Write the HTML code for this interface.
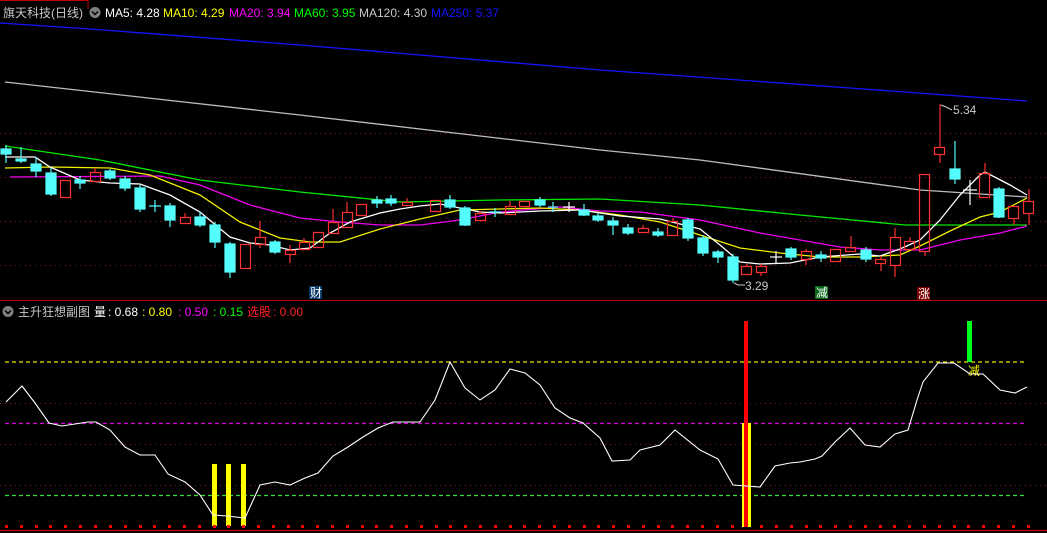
<!DOCTYPE html>
<html><head><meta charset="utf-8"><style>
html,body{margin:0;padding:0;background:#000;width:1047px;height:533px;overflow:hidden}
svg{display:block}
text{font-family:"Liberation Sans","Noto Sans CJK SC",sans-serif;font-size:12px}
</style></head><body>
<svg width="1047" height="533" xmlns="http://www.w3.org/2000/svg">
<rect width="1047" height="533" fill="#000"/>
<!-- grid -->
<g stroke="#8a1c1c" stroke-width="1" stroke-dasharray="1,4">
<line x1="0" y1="133.5" x2="1047" y2="133.5"/>
<line x1="0" y1="177.5" x2="1047" y2="177.5"/>
<line x1="0" y1="221.5" x2="1047" y2="221.5"/>
<line x1="0" y1="265.5" x2="1047" y2="265.5"/>
<line x1="0" y1="403.5" x2="1047" y2="403.5"/>
<line x1="0" y1="444.5" x2="1047" y2="444.5"/>
<line x1="0" y1="485.5" x2="1047" y2="485.5"/>
</g>
<line x1="0" y1="300.5" x2="1047" y2="300.5" stroke="#c00000"/>
<line x1="0" y1="530.5" x2="1047" y2="530.5" stroke="#c00000" stroke-width="1.5"/>
<path d="M0 0.5H88V9" stroke="#c00000" fill="none"/>
<!-- MAs -->
<g fill="none" stroke-width="1.3">
<polyline stroke="#1414ff" points="0,23 90,29 300,45 600,70 850,88 1027,101"/>
<polyline stroke="#bdbdbd" points="5,82 300,115 600,150 700,160 920,190 1027,197"/>
<polyline stroke="#00e800" points="5,146 100,160 200,180 300,192 400,202 500,200 600,199 700,205 800,215 905,225 1027,225"/>
<polyline stroke="#f000f0" points="10,177 160,176 200,185 250,205 300,218 340,222 380,225 420,225 460,220 500,212 560,207 600,211 640,212 700,220 760,233 800,240 840,247 880,250 920,250 960,240 1000,233 1027,226"/>
<polyline stroke="#f0f000" points="5,168 50,167 110,168 150,175 200,195 240,222 280,238 310,242 340,242 380,229 420,219 460,210 500,209 540,208 580,210 620,215 660,222 700,235 740,248 780,253 820,257 860,257 900,255 920,246 950,231 980,217 1000,212 1027,198"/>
<polyline stroke="#ffffff" points="5,157 35,157 50,167 80,180 110,183 140,184 170,195 200,212 230,237 250,243 270,245 290,250 310,248 330,233 350,222 380,213 400,209 420,206 440,204 460,208 480,212 500,213 520,212 540,211 580,210 620,216 660,219 700,229 720,245 740,262 760,264 790,263 820,257 860,254 880,256 900,249 920,240 940,220 960,195 980,175 985,172 1010,185 1027,195"/>
</g>
<!-- candles -->
<g stroke-width="1.2">
<g stroke="#54fcfc" fill="#54fcfc">
<line x1="6" y1="145" x2="6" y2="163"/><rect x="1" y="149" width="10" height="5"/>
<line x1="21" y1="147" x2="21" y2="163"/><rect x="16" y="159" width="10" height="2"/>
<line x1="36" y1="157" x2="36" y2="177"/><rect x="31" y="164" width="10" height="7"/>
<line x1="51" y1="168" x2="51" y2="196"/><rect x="46" y="173" width="10" height="21"/>
<line x1="80" y1="176" x2="80" y2="189"/><rect x="75" y="180" width="10" height="3"/>
<line x1="110" y1="169" x2="110" y2="180"/><rect x="105" y="171" width="10" height="7"/>
<line x1="125" y1="176" x2="125" y2="191"/><rect x="120" y="179" width="10" height="9"/>
<line x1="140" y1="185" x2="140" y2="212"/><rect x="135" y="188" width="10" height="21"/>
<line x1="155" y1="200" x2="155" y2="212"/><line x1="149" y1="206" x2="161" y2="206"/>
<line x1="170" y1="203" x2="170" y2="227"/><rect x="165" y="206" width="10" height="14"/>
<line x1="200" y1="212" x2="200" y2="227"/><rect x="195" y="217" width="10" height="8"/>
<line x1="215" y1="222" x2="215" y2="248"/><rect x="210" y="225" width="10" height="17"/>
<line x1="230" y1="242" x2="230" y2="278"/><rect x="225" y="244" width="10" height="28"/>
<line x1="275" y1="240" x2="275" y2="254"/><rect x="270" y="242" width="10" height="10"/>
<line x1="377" y1="196" x2="377" y2="208"/><rect x="372" y="200" width="10" height="3"/>
<line x1="391" y1="195" x2="391" y2="206"/><rect x="386" y="199" width="10" height="4"/>
<line x1="450" y1="195" x2="450" y2="209"/><rect x="445" y="200" width="10" height="7"/>
<line x1="465" y1="206" x2="465" y2="226"/><rect x="460" y="208" width="10" height="17"/>
<line x1="495" y1="208" x2="495" y2="217"/><line x1="489" y1="212" x2="501" y2="212"/>
<line x1="540" y1="197" x2="540" y2="207"/><rect x="535" y="200" width="10" height="5"/>
<line x1="553" y1="202" x2="553" y2="212"/><line x1="548" y1="207" x2="558" y2="207"/>
<line x1="584" y1="204" x2="584" y2="216"/><rect x="579" y="210" width="10" height="5"/>
<line x1="598" y1="213" x2="598" y2="222"/><rect x="593" y="216" width="10" height="4"/>
<line x1="613" y1="217" x2="613" y2="235"/><rect x="608" y="221" width="10" height="4"/>
<line x1="628" y1="224" x2="628" y2="235"/><rect x="623" y="228" width="10" height="5"/>
<line x1="658" y1="228" x2="658" y2="237"/><rect x="653" y="232" width="10" height="3"/>
<line x1="688" y1="218" x2="688" y2="241"/><rect x="683" y="220" width="10" height="18"/>
<line x1="703" y1="235" x2="703" y2="256"/><rect x="698" y="238" width="10" height="15"/>
<line x1="718" y1="250" x2="718" y2="263"/><rect x="713" y="252" width="10" height="5"/>
<line x1="733" y1="254" x2="733" y2="283"/><rect x="728" y="257" width="10" height="23"/>
<line x1="791" y1="247" x2="791" y2="260"/><rect x="786" y="249" width="10" height="8"/>
<line x1="821" y1="251" x2="821" y2="262"/><rect x="816" y="255" width="10" height="3"/>
<line x1="866" y1="247" x2="866" y2="262"/><rect x="861" y="250" width="10" height="9"/>
<line x1="955" y1="141" x2="955" y2="184"/><rect x="950" y="169" width="10" height="10"/>
<line x1="999" y1="187" x2="999" y2="218"/><rect x="994" y="189" width="10" height="28"/>
</g>
<g stroke="#ffffff" fill="none">
<line x1="569" y1="202" x2="569" y2="212"/><line x1="563" y1="207" x2="575" y2="207"/>
<line x1="776" y1="251" x2="776" y2="263"/><line x1="770" y1="257" x2="782" y2="257"/>
<line x1="970" y1="180" x2="970" y2="205"/><line x1="963" y1="190" x2="977" y2="190"/>
</g>
<g stroke="#ff3030" fill="none">
<rect x="60.5" y="180.5" width="10" height="17"/>
<line x1="185" y1="213" x2="185" y2="217"/><rect x="180.5" y="217.5" width="10" height="6"/>
<line x1="95" y1="168" x2="95" y2="172"/><rect x="90.5" y="172.5" width="10" height="9"/>
<rect x="240.5" y="244.5" width="10" height="24"/>
<line x1="260" y1="221" x2="260" y2="237"/><line x1="260" y1="244" x2="260" y2="248"/><rect x="255.5" y="237.5" width="10" height="7"/>
<line x1="290" y1="245" x2="290" y2="250"/><line x1="290" y1="254" x2="290" y2="263"/><rect x="285.5" y="250.5" width="10" height="4"/>
<line x1="304" y1="238" x2="304" y2="242"/><rect x="299.5" y="242.5" width="10" height="7"/>
<rect x="313.5" y="232.5" width="10" height="15"/>
<line x1="333" y1="209" x2="333" y2="222"/><rect x="328.5" y="222.5" width="10" height="11"/>
<line x1="347" y1="202" x2="347" y2="212"/><rect x="342.5" y="212.5" width="10" height="15"/>
<rect x="356.5" y="204.5" width="10" height="11"/>
<line x1="407" y1="198" x2="407" y2="202"/><rect x="402.5" y="202.5" width="10" height="3"/>
<rect x="430.5" y="200.5" width="10" height="11"/>
<line x1="480" y1="211" x2="480" y2="213"/><rect x="475.5" y="213.5" width="10" height="7"/>
<line x1="510" y1="201" x2="510" y2="206"/><rect x="505.5" y="206.5" width="10" height="8"/>
<rect x="519.5" y="201.5" width="10" height="5"/>
<line x1="643" y1="225" x2="643" y2="228"/><rect x="638.5" y="228.5" width="10" height="4"/>
<line x1="673" y1="218" x2="673" y2="221"/><rect x="667.5" y="221.5" width="10" height="14"/>
<line x1="747" y1="264" x2="747" y2="266"/><rect x="741.5" y="266.5" width="10" height="8"/>
<line x1="761" y1="264" x2="761" y2="266"/><line x1="761" y1="272" x2="761" y2="276"/><rect x="756.5" y="266.5" width="10" height="6"/>
<line x1="806" y1="249" x2="806" y2="251"/><line x1="806" y1="259" x2="806" y2="265"/><rect x="801.5" y="251.5" width="10" height="8"/>
<rect x="830.5" y="249.5" width="10" height="12"/>
<line x1="851" y1="236" x2="851" y2="247"/><rect x="845.5" y="247.5" width="10" height="4"/>
<line x1="881" y1="256" x2="881" y2="259"/><line x1="881" y1="263" x2="881" y2="271"/><rect x="875.5" y="259.5" width="10" height="4"/>
<line x1="895" y1="228" x2="895" y2="237"/><line x1="895" y1="265" x2="895" y2="277"/><rect x="890.5" y="237.5" width="10" height="28"/>
<line x1="910" y1="237" x2="910" y2="241"/><rect x="904.5" y="241.5" width="10" height="8"/>
<line x1="925" y1="251" x2="925" y2="256"/><rect x="919.5" y="174.5" width="10" height="77"/>
<line x1="940" y1="104" x2="940" y2="147"/><line x1="940" y1="154" x2="940" y2="163"/><rect x="934.5" y="147.5" width="10" height="7"/>
<line x1="985" y1="163" x2="985" y2="173"/><rect x="979.5" y="173.5" width="10" height="24"/>
<line x1="1014" y1="218" x2="1014" y2="225"/><rect x="1008.5" y="206.5" width="10" height="12"/>
<line x1="1029" y1="189" x2="1029" y2="201"/><line x1="1029" y1="213" x2="1029" y2="225"/><rect x="1023.5" y="201.5" width="10" height="12"/>
</g>
</g>
<!-- price labels -->
<path d="M941 105 L946 107 L952 110" stroke="#c8c8c8" fill="none"/>
<text x="953" y="114" fill="#c8c8c8">5.34</text>
<path d="M734 283 L738 285 L745 285" stroke="#c8c8c8" fill="none"/>
<text x="745" y="290" fill="#c8c8c8">3.29</text>
<rect x="309" y="286" width="13" height="13" fill="#0a3a6a"/>
<text x="310" y="297" fill="#fff" font-size="11">财</text>
<rect x="815" y="286" width="13" height="13" fill="#0a6a1a"/>
<text x="816" y="297" fill="#fff" font-size="11">减</text>
<rect x="917" y="287" width="13" height="13" fill="#7a0000"/>
<text x="918" y="298" fill="#fff" font-size="11">涨</text>
<!-- header -->
<text x="3" y="17" fill="#c8c8c8" font-size="13">旗天科技(日线)</text>
<circle cx="95" cy="12.5" r="5.5" fill="#808080"/><path d="M92 11.5 L95 14.5 L98 11.5" stroke="#000" stroke-width="1.5" fill="none"/>
<text x="105" y="17" fill="#ffffff">MA5: 4.28</text>
<text x="163" y="17" fill="#ffff00">MA10: 4.29</text>
<text x="229" y="17" fill="#ff00ff">MA20: 3.94</text>
<text x="294" y="17" fill="#00ff00">MA60: 3.95</text>
<text x="359" y="17" fill="#c8c8c8">MA120: 4.30</text>
<text x="431" y="17" fill="#1414ff">MA250: 5.37</text>
<!-- sub header -->
<circle cx="8" cy="311.5" r="5.5" fill="#808080"/><path d="M5 310.5 L8 313.5 L11 310.5" stroke="#000" stroke-width="1.5" fill="none"/>
<text x="18" y="316" fill="#c8c8c8" font-size="13">主升狂想副图</text>
<text x="94" y="316" fill="#fff" font-size="13">量</text>
<text x="108" y="316" fill="#fff">: 0.68</text>
<text x="142" y="316" fill="#ffff00">: 0.80</text>
<text x="178" y="316" fill="#ff00ff">: 0.50</text>
<text x="213" y="316" fill="#00ff00">: 0.15</text>
<text x="247" y="316" fill="#ff2020" font-size="13">选股</text>
<text x="273" y="316" fill="#ff2020">: 0.00</text>
<!-- indicator -->
<g stroke-width="1.2" stroke-dasharray="4,3">
<line x1="5" y1="362" x2="1027" y2="362" stroke="#e8e800"/>
<line x1="5" y1="423.5" x2="1027" y2="423.5" stroke="#e000e0"/>
<line x1="5" y1="495.5" x2="1027" y2="495.5" stroke="#30e030"/>
</g>
<rect x="212" y="464" width="5" height="62" fill="#ffff00"/>
<rect x="226" y="464" width="5" height="62" fill="#ffff00"/>
<rect x="241" y="464" width="5" height="62" fill="#ffff00"/>
<rect x="742" y="423" width="9" height="104" fill="#ffff00"/>
<rect x="744" y="321" width="4" height="206" fill="#ff0000"/>
<rect x="967" y="321" width="5" height="41" fill="#00ff20"/>
<text x="968" y="375" fill="#ffff00" font-size="11">减</text>
<polyline fill="none" stroke="#ffffff" stroke-width="1.1" points="6,402 22,386 35,403 49,423 62,426 75,424 88,422 96,422 110,430 125,447 140,455 155,455 168,474 185,482 200,495 213,515 227,516 245,518 260,485 275,482 290,485 305,478 318,473 333,456 348,447 363,437 378,428 393,422 408,422 420,422 435,400 450,362 465,388 480,400 495,390 510,369 525,373 540,385 555,408 570,418 583,423 600,438 612,461 630,460 640,450 660,445 675,430 700,450 718,459 733,485 746,486 760,487 775,466 790,463 800,462 815,459 822,456 835,442 850,428 865,445 880,447 895,434 908,430 917,400 923,382 938,363 954,363 970,374 983,374 1000,390 1015,393 1027,387"/>
<g fill="#ff0000">
<rect x="5" y="525" width="3" height="3"/><rect x="20" y="525" width="3" height="3"/><rect x="35" y="525" width="3" height="3"/><rect x="49" y="525" width="3" height="3"/><rect x="64" y="525" width="3" height="3"/><rect x="79" y="525" width="3" height="3"/><rect x="94" y="525" width="3" height="3"/><rect x="109" y="525" width="3" height="3"/><rect x="124" y="525" width="3" height="3"/><rect x="139" y="525" width="3" height="3"/><rect x="153" y="525" width="3" height="3"/><rect x="168" y="525" width="3" height="3"/><rect x="183" y="525" width="3" height="3"/><rect x="198" y="525" width="3" height="3"/><rect x="213" y="525" width="3" height="3"/><rect x="227" y="525" width="3" height="3"/><rect x="242" y="525" width="3" height="3"/><rect x="257" y="525" width="3" height="3"/><rect x="272" y="525" width="3" height="3"/><rect x="287" y="525" width="3" height="3"/><rect x="301" y="525" width="3" height="3"/><rect x="316" y="525" width="3" height="3"/><rect x="331" y="525" width="3" height="3"/><rect x="346" y="525" width="3" height="3"/><rect x="361" y="525" width="3" height="3"/><rect x="375" y="525" width="3" height="3"/><rect x="390" y="525" width="3" height="3"/><rect x="405" y="525" width="3" height="3"/><rect x="420" y="525" width="3" height="3"/><rect x="435" y="525" width="3" height="3"/><rect x="449" y="525" width="3" height="3"/><rect x="464" y="525" width="3" height="3"/><rect x="479" y="525" width="3" height="3"/><rect x="494" y="525" width="3" height="3"/><rect x="509" y="525" width="3" height="3"/><rect x="523" y="525" width="3" height="3"/><rect x="538" y="525" width="3" height="3"/><rect x="553" y="525" width="3" height="3"/><rect x="568" y="525" width="3" height="3"/><rect x="583" y="525" width="3" height="3"/><rect x="597" y="525" width="3" height="3"/><rect x="612" y="525" width="3" height="3"/><rect x="627" y="525" width="3" height="3"/><rect x="642" y="525" width="3" height="3"/><rect x="657" y="525" width="3" height="3"/><rect x="671" y="525" width="3" height="3"/><rect x="686" y="525" width="3" height="3"/><rect x="701" y="525" width="3" height="3"/><rect x="716" y="525" width="3" height="3"/><rect x="731" y="525" width="3" height="3"/><rect x="760" y="525" width="3" height="3"/><rect x="775" y="525" width="3" height="3"/><rect x="790" y="525" width="3" height="3"/><rect x="805" y="525" width="3" height="3"/><rect x="819" y="525" width="3" height="3"/><rect x="834" y="525" width="3" height="3"/><rect x="849" y="525" width="3" height="3"/><rect x="864" y="525" width="3" height="3"/><rect x="879" y="525" width="3" height="3"/><rect x="893" y="525" width="3" height="3"/><rect x="908" y="525" width="3" height="3"/><rect x="923" y="525" width="3" height="3"/><rect x="938" y="525" width="3" height="3"/><rect x="953" y="525" width="3" height="3"/><rect x="967" y="525" width="3" height="3"/><rect x="982" y="525" width="3" height="3"/><rect x="997" y="525" width="3" height="3"/><rect x="1012" y="525" width="3" height="3"/><rect x="1027" y="525" width="3" height="3"/>
</g>
</svg>
</body></html>
